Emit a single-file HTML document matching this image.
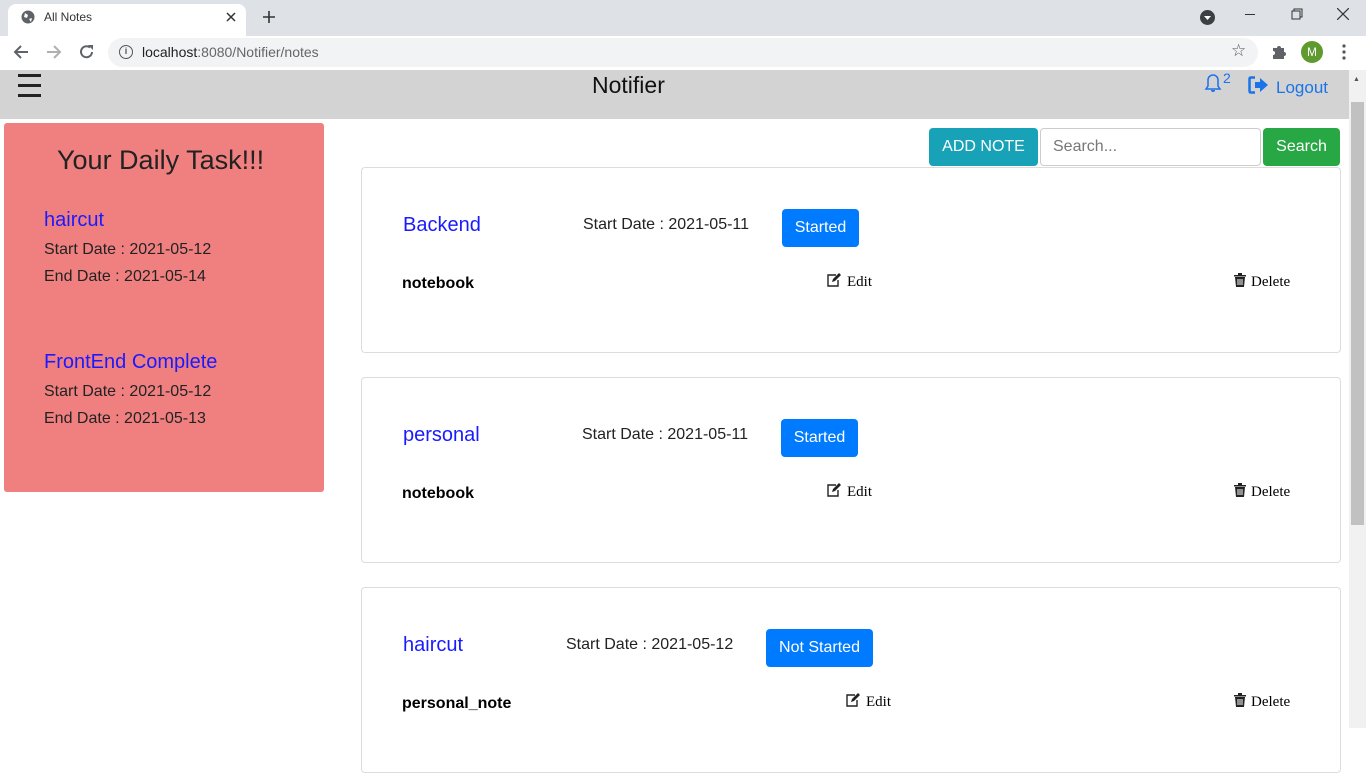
<!DOCTYPE html>
<html><head><meta charset="utf-8"><style>
*{margin:0;padding:0;box-sizing:border-box}
body{width:1366px;height:728px;overflow:hidden;background:#fff;font-family:"Liberation Sans",Arial,sans-serif;position:relative}
.a{position:absolute}
.card{position:absolute;left:361px;width:980px;height:186px;border:1px solid #dcdcdc;border-radius:4px;background:#fff}
.ttl{position:absolute;left:41px;top:46px;font-size:20px;color:#1a1aff}
.sd{position:absolute;font-size:16px;color:#222}
.btn{position:absolute;background:#007bff;color:#fff;font-size:16px;border-radius:4px;text-align:center;line-height:38px;height:38px}
.nb{position:absolute;left:40px;top:107px;font-size:16px;font-weight:bold;color:#000}
.ed{position:absolute;top:105px;font-family:"Liberation Serif",serif;font-size:15px;color:#000;white-space:nowrap}
.ed svg{vertical-align:-1px;margin-right:5px}
</style></head><body>
<div class="a" style="left:0;top:0;width:1366px;height:36px;background:#dee1e6"></div>
<div class="a" style="left:8px;top:4px;width:238px;height:32px;background:#fff;border-radius:8px 8px 0 0"></div>
<svg class="a" style="left:21px;top:10px" width="14" height="14" viewBox="0 0 14 14"><circle cx="7" cy="7" r="6.5" fill="#5f6368"/><path d="M4 3 L7 5 L6 8 L3 7Z M8 9 L11 8 L10 12Z" fill="#fff"/></svg>
<div class="a" style="left:44px;top:10px;font-size:12px;color:#333">All Notes</div>
<svg class="a" style="left:226px;top:12px" width="10" height="10"><path d="M1 1L9 9M9 1L1 9" stroke="#333" stroke-width="1.5"/></svg>
<svg class="a" style="left:262px;top:10px" width="14" height="14"><path d="M7 1V13M1 7H13" stroke="#333" stroke-width="1.6"/></svg>
<svg class="a" style="left:1200px;top:10px" width="15" height="15"><circle cx="7.5" cy="7.5" r="7.5" fill="#3c4043"/><path d="M4 6H11L7.5 10Z" fill="#fff"/></svg>
<div class="a" style="left:1245px;top:14px;width:10px;height:1px;background:#333"></div>
<svg class="a" style="left:1291px;top:8px" width="12" height="12"><path d="M3 3V1H11V9H9M1 3H9V11H1Z" fill="none" stroke="#333"/></svg>
<svg class="a" style="left:1337px;top:8px" width="12" height="12"><path d="M0 0L12 12M12 0L0 12" stroke="#333" stroke-width="1.2"/></svg>
<div class="a" style="left:0;top:36px;width:1366px;height:34px;background:#fff"></div>
<svg class="a" style="left:13px;top:44px" width="16" height="16"><path d="M15 8H2M8 2L2 8L8 14" fill="none" stroke="#5f6368" stroke-width="2"/></svg>
<svg class="a" style="left:46px;top:44px" width="16" height="16"><path d="M1 8H14M8 2L14 8L8 14" fill="none" stroke="#b0b0b0" stroke-width="2"/></svg>
<svg class="a" style="left:79px;top:44px" width="16" height="16"><path d="M13 8A5.5 5.5 0 1 1 11 3.5" fill="none" stroke="#5f6368" stroke-width="2"/><path d="M9 1H14V6Z" fill="#5f6368"/></svg>
<div class="a" style="left:108px;top:38px;width:1150px;height:29px;background:#f1f3f4;border-radius:15px"></div>
<div class="a" style="left:119px;top:45px;width:14px;height:14px;border:1.5px solid #555;border-radius:50%;font-size:9px;text-align:center;line-height:11px;color:#555;font-weight:bold">i</div>
<div class="a" style="left:142px;top:44px;font-size:14px;color:#202124">localhost<span style="color:#666">:8080/Notifier/notes</span></div>
<div class="a" style="left:1231px;top:41px;font-size:17px;color:#555">☆</div>
<svg class="a" style="left:1271px;top:43px" width="17" height="17" viewBox="0 0 17 17"><path d="M2 5H6A2 2 0 1 1 10 5H13V9A2 2 0 1 1 13 13V16H2V12A2 2 0 1 0 2 8Z" fill="#5f6368"/></svg>
<div class="a" style="left:1301px;top:41px;width:22px;height:22px;border-radius:50%;background:#5f9a2f;color:#fff;font-size:12px;text-align:center;line-height:22px">M</div>
<svg class="a" style="left:1342px;top:44px" width="4" height="16"><circle cx="2" cy="2" r="1.6" fill="#555"/><circle cx="2" cy="8" r="1.6" fill="#555"/><circle cx="2" cy="14" r="1.6" fill="#555"/></svg>
<div class="a" style="left:0;top:70px;width:1349px;height:49px;background:#d3d3d3"></div>
<div class="a" style="left:18px;top:74px;width:23px;height:3px;background:#222;box-shadow:0 10px 0 #222,0 20px 0 #222"></div>
<div class="a" style="left:592px;top:72px;font-size:23px;color:#111">Notifier</div>
<svg class="a" style="left:1203px;top:72px" width="20" height="22" viewBox="0 0 20 22"><path d="M3 17 L17 17 L15 14 L15 8 A5 5 0 0 0 5 8 L5 14Z" fill="none" stroke="#1a73e8" stroke-width="1.5"/><path d="M8 18 A2 2 0 0 0 12 18Z" fill="#1a73e8"/></svg>
<div class="a" style="left:1223px;top:70px;font-size:14px;color:#1a73e8">2</div>
<svg class="a" style="left:1248px;top:76px" width="22" height="18" viewBox="0 0 22 18"><path d="M7 1.5 H3 Q1.5 1.5 1.5 3 V15 Q1.5 16.5 3 16.5 H7" fill="none" stroke="#1a73e8" stroke-width="2.5"/><path d="M7 6 H12 V2 L20 9 L12 16 V12 H7Z" fill="#1a73e8"/></svg>
<div class="a" style="left:1276px;top:78px;font-size:17px;color:#1a73e8">Logout</div>
<div class="a" style="left:1349px;top:70px;width:17px;height:658px;background:#f1f1f1"></div>
<div class="a" style="left:1351px;top:102px;width:13px;height:423px;background:#c1c1c1"></div>
<div class="a" style="left:1353px;top:76px;font-size:7px;color:#555">▲</div>
<div class="a" style="left:4px;top:123px;width:320px;height:369px;background:#f08080;border-radius:3px"></div>
<div class="a" style="left:57px;top:145px;font-size:27px;color:#222">Your Daily Task!!!</div>
<div class="a" style="left:44px;top:209px;font-size:20px;color:#1a1aff">haircut</div>
<div class="a" style="left:44px;top:241px;font-size:16px;color:#222">Start Date : 2021-05-12</div>
<div class="a" style="left:44px;top:268px;font-size:16px;color:#222">End Date : 2021-05-14</div>
<div class="a" style="left:44px;top:351px;font-size:20px;color:#1a1aff">FrontEnd Complete</div>
<div class="a" style="left:44px;top:383px;font-size:16px;color:#222">Start Date : 2021-05-12</div>
<div class="a" style="left:44px;top:410px;font-size:16px;color:#222">End Date : 2021-05-13</div>
<div class="a" style="left:929px;top:128px;width:109px;height:38px;background:#17a2b8;border-radius:4px;color:#fff;font-size:16px;text-align:center;line-height:38px">ADD NOTE</div>
<div class="a" style="left:1040px;top:128px;width:221px;height:38px;border:1px solid #ccc;border-radius:4px;color:#777;font-size:16px;padding-left:12px;line-height:36px">Search...</div>
<div class="a" style="left:1263px;top:128px;width:77px;height:38px;background:#28a745;border-radius:4px;color:#fff;font-size:16px;text-align:center;line-height:38px">Search</div>
<div class="card" style="top:167px">
<div class="ttl">Backend</div><div class="sd" style="left:221px;top:48px">Start Date : 2021-05-11</div>
<div class="btn" style="left:420px;top:41px;width:77px">Started</div>
<div class="nb">notebook</div>
<div class="ed" style="left:464px"><svg width="16" height="14" viewBox="0 0 16 14"><path d="M10 2H2V13H12V7" fill="none" stroke="#222" stroke-width="1.4"/><path d="M6 9L7 6L13 0L15 2L9 8Z" fill="#222"/></svg>Edit</div>
<div class="ed" style="left:872px"><svg width="12" height="14" viewBox="0 0 12 14"><path d="M0 2H12V3.5H0ZM4 0H8V2H4ZM1 4H11L10 14H2Z" fill="#222"/><path d="M4 6V12M6 6V12M8 6V12" stroke="#fff"/></svg>Delete</div></div>
<div class="card" style="top:377px">
<div class="ttl">personal</div><div class="sd" style="left:220px;top:48px">Start Date : 2021-05-11</div>
<div class="btn" style="left:419px;top:41px;width:77px">Started</div>
<div class="nb">notebook</div>
<div class="ed" style="left:464px"><svg width="16" height="14" viewBox="0 0 16 14"><path d="M10 2H2V13H12V7" fill="none" stroke="#222" stroke-width="1.4"/><path d="M6 9L7 6L13 0L15 2L9 8Z" fill="#222"/></svg>Edit</div>
<div class="ed" style="left:872px"><svg width="12" height="14" viewBox="0 0 12 14"><path d="M0 2H12V3.5H0ZM4 0H8V2H4ZM1 4H11L10 14H2Z" fill="#222"/><path d="M4 6V12M6 6V12M8 6V12" stroke="#fff"/></svg>Delete</div></div>
<div class="card" style="top:587px">
<div class="ttl">haircut</div><div class="sd" style="left:204px;top:48px">Start Date : 2021-05-12</div>
<div class="btn" style="left:404px;top:41px;width:107px">Not Started</div>
<div class="nb">personal_note</div>
<div class="ed" style="left:483px"><svg width="16" height="14" viewBox="0 0 16 14"><path d="M10 2H2V13H12V7" fill="none" stroke="#222" stroke-width="1.4"/><path d="M6 9L7 6L13 0L15 2L9 8Z" fill="#222"/></svg>Edit</div>
<div class="ed" style="left:872px"><svg width="12" height="14" viewBox="0 0 12 14"><path d="M0 2H12V3.5H0ZM4 0H8V2H4ZM1 4H11L10 14H2Z" fill="#222"/><path d="M4 6V12M6 6V12M8 6V12" stroke="#fff"/></svg>Delete</div></div>
</body></html>
